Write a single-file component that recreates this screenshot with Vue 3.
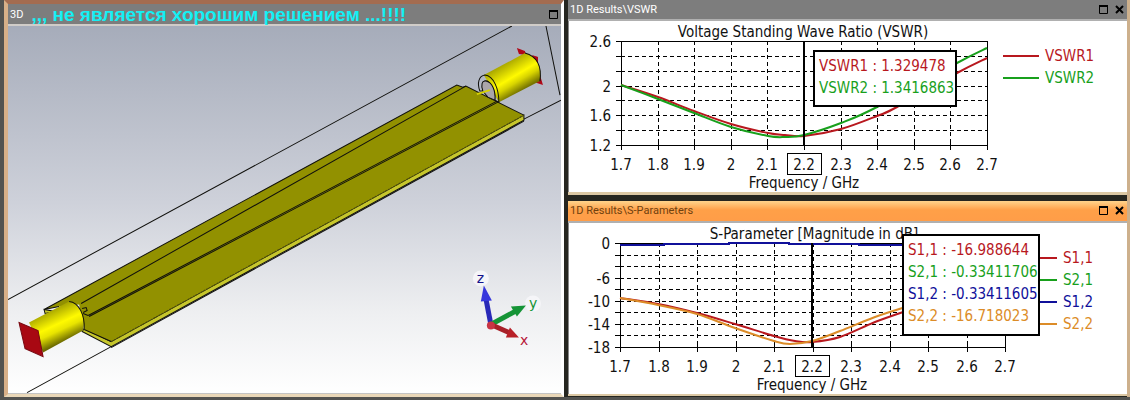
<script setup>
const red = '#b8181e'
const green = '#18a01c'
const blue = '#10109a'
const orange = '#dc8c28'

const steps = ['1.7', '1.8', '1.9', '2', '2.1', '2.2', '2.3', '2.4', '2.5', '2.6', '2.7']

function smooth(points) {
  let d = `M${points[0][0]} ${points[0][1]}`
  for (let i = 0; i < points.length - 1; i++) {
    const a = points[i - 1] || points[i]
    const b = points[i]
    const c = points[i + 1]
    const e = points[i + 2] || c
    d += ` C${b[0] + (c[0] - a[0]) / 6} ${b[1] + (c[1] - a[1]) / 6} ${c[0] - (e[0] - b[0]) / 6} ${c[1] - (e[1] - b[1]) / 6} ${c[0]} ${c[1]}`
  }
  return d
}

const charts = [
  {
    id: 'vswr', name: '1D Results\\VSWR', active: false,
    title: 'Voltage Standing Wave Ratio (VSWR)', titleX: 234,
    width: 434, height: 171, left: 52, right: 418, top: 20, bottom: 124, rows: 7, marker: 235,
    labelX: 42,
    labels: [[0, '2.6'], [3, '2'], [5, '1.6'], [7, '1.2']],
    curves: [
      { color: red, d: smooth([[52, 64], [89, 76], [125, 90], [162, 103], [199, 112], [216, 114], [235, 115], [272, 108], [308, 95], [328, 86], [388, 52], [418, 37]]) },
      { color: green, d: smooth([[52, 64], [89, 78], [125, 92], [162, 106], [199, 115], [216, 116], [235, 114], [272, 102], [308, 86], [388, 42], [418, 27]]) }
    ],
    readout: [['VSWR1', '1.329478', red], ['VSWR2', '1.3416863', green]],
    legend: [['VSWR1', red], ['VSWR2', green]]
  },
  {
    id: 'spar', name: '1D Results\\S-Parameters', active: true,
    title: 'S-Parameter [Magnitude in dB]', titleX: 245,
    width: 452, height: 171, left: 51, right: 436, top: 20, bottom: 124, rows: 9, marker: 243,
    labelX: 41,
    labels: [[0, '0'], [3, '-6'], [5, '-10'], [7, '-14'], [9, '-18']],
    curves: [
      { color: blue, d: 'M51 22H95V21H160V20H220V21H290V22H340' },
      { color: red, d: smooth([[51, 75], [89, 81], [128, 90], [166, 101], [205, 113], [226, 118], [243, 119], [271, 114], [306, 99], [340, 87]]) },
      { color: orange, d: smooth([[51, 75], [89, 82], [128, 91], [166, 105], [205, 118], [221, 121], [243, 118], [271, 108], [306, 94], [340, 83]]) }
    ],
    readout: [['S1,1', '-16.988644', red], ['S2,1', '-0.33411706', green], ['S1,2', '-0.33411605', blue], ['S2,2', '-16.718023', orange]],
    legend: [['S1,1', red], ['S2,1', green], ['S1,2', blue], ['S2,2', orange]]
  }
]

const gx = (c, i) => Math.round(c.left + (c.right - c.left) * i / 10)
const gy = (c, i) => Math.round(c.top + (c.bottom - c.top) * i / c.rows)
</script>

<template>
  <main class="desktop">
    <section class="window scene">
      <header class="bar">
        <span class="name">3D</span>
        <h1>,,, не является хорошим решением ...!!!!</h1>
        <button type="button" aria-label="Maximize"><svg width="9" height="9" viewBox="0 0 9 9"><path d="M0 1H9" stroke-width="2" /><path d="M0.5 1V8.5H8.5V1" /></svg></button>
      </header>
      <svg class="view" viewBox="9 26 552 367" role="img" aria-label="3D model">
        <defs>
          <linearGradient id="sky" x1="0" y1="0" x2="0" y2="1">
            <stop offset="0" stop-color="#a6acba" />
            <stop offset=".48" stop-color="#ced1da" />
            <stop offset=".78" stop-color="#eeeff1" />
            <stop offset="1" stop-color="#fff" />
          </linearGradient>
          <linearGradient id="tubeA" gradientUnits="userSpaceOnUse" x1="50" y1="311" x2="64" y2="341">
            <stop offset="0" stop-color="#aaa800" /><stop offset=".45" stop-color="#fffa00" />
            <stop offset=".65" stop-color="#e8e400" /><stop offset="1" stop-color="#6d6b00" />
          </linearGradient>
          <linearGradient id="tubeB" gradientUnits="userSpaceOnUse" x1="504" y1="64" x2="520" y2="91">
            <stop offset="0" stop-color="#aaa800" /><stop offset=".5" stop-color="#fffa00" />
            <stop offset=".7" stop-color="#d8d400" /><stop offset="1" stop-color="#777500" />
          </linearGradient>
        </defs>
        <rect x="9" y="26" width="552" height="367" fill="url(#sky)" />
        <g class="edge">
          <path d="M9 299L512 26M546 26L560 95M561 100L524 119M112 346L28 392" />
          <path fill="#c6c62c" d="M112 341L524 115V120L112 346L83 331L85 328ZM45 309L46 313L56 311Z" />
          <path fill="#929100" stroke="none" d="M45 309L457 85L463 87L466 86L524 115L112 341L85 329L80 304L60 306Z" />
          <path d="M60 306L45 309L457 85L463 87L466 86L524 115M85 329L112 341" />
          <path d="M112 341L524 115" stroke="#4a4a08" stroke-dasharray="2 1" />
          <path d="M82 303L466 86M89 315L497 101M90 316L498 102" />
          <path d="M112 347L524 121" />
        </g>
        <path fill="#b00818" d="M517 48L525 51L526 55L519 54ZM531 56L538 57L538 64ZM540 75L543 85L534 82Z" />
        <path fill="url(#tubeB)" d="M484 75L525 53Q543 58 540 81L499 102Z" />
        <path fill="#b00818" d="M532 55L538 57L538 63Z" />
        <path class="edge" d="M525 53Q543 58 540 81" />
        <path class="edge" fill="#b0ae00" d="M480 91C477 83 479 76 485 75C494 76 499 89 499 102L495 100C496 90 489 79 485 81C482 82 482 86 483 91Z" />
        <path class="edge shade" d="M483 91C481 85 482 80 486 81C492 82 496 90 495 100L488 97Z" />
        <path d="M477 94L490 90" stroke="#d8d400" stroke-width="2" />
        <path fill="url(#tubeA)" d="M30 322L70 301C80 302 86 315 84 330L44 352Z" />
        <path class="edge" d="M70 301C80 302 86 315 85 329M83 308L87 307L88 310L84 312M84 313L89 315" />
        <path fill="#a80812" stroke="#780810" d="M20 322L39 330L44 356L26 348Z" />
        <g fill="#f5f5f8">
          <circle cx="481" cy="278" r="8" /><circle cx="533" cy="303" r="8" /><circle cx="524" cy="339" r="6" />
        </g>
        <path d="M491 324L486 298" stroke="#2929b8" stroke-width="5" />
        <path fill="#3636dc" d="M484 285L492 300L481 301Z" />
        <path d="M491 324L515 311" stroke="#159436" stroke-width="5" />
        <path fill="#159436" d="M526 305L511 306L517 316Z" />
        <path d="M491 324L509 332" stroke="#a82028" stroke-width="5" />
        <path fill="#b82028" d="M519 337L510 327L506 337Z" />
        <circle cx="491" cy="325" r="4" fill="#c83444" />
        <g class="axis">
          <text x="477" y="283" fill="#14148c">z</text>
          <text x="529" y="307" fill="#159436">y</text>
          <text x="520" y="344" fill="#b81838">x</text>
        </g>
      </svg>
    </section>

    <div class="results">
      <section v-for="c in charts" :key="c.id" class="window result" :class="{ active: c.active }">
        <header class="bar">
          <h2 class="name">{{ c.name }}</h2>
          <button type="button" aria-label="Maximize"><svg width="9" height="9" viewBox="0 0 9 9"><path d="M0 1H9" stroke-width="2" /><path d="M0.5 1V8.5H8.5V1" /></svg></button>
          <button type="button" aria-label="Close"><svg width="9" height="9" viewBox="0 0 9 9"><path d="M1 1L8 8M8 1L1 8" stroke-width="2" /></svg></button>
        </header>
        <div class="chart" :class="c.id">
          <svg class="plot" :viewBox="`0 0 ${c.width} ${c.height}`" role="img" :aria-label="c.title">
            <text :x="c.titleX" y="16">{{ c.title }}</text>
            <g class="grid">
              <path v-for="i in 9" :key="'v' + i" :d="`M${gx(c, i)} ${c.top}V${c.bottom}`" />
              <path v-for="i in c.rows - 1" :key="'h' + i" :d="`M${c.left} ${gy(c, i)}H${c.right}`" />
            </g>
            <g class="ticks">
              <path v-for="(s, i) in steps" :key="'t' + s" :d="`M${gx(c, i)} ${c.bottom - 3}V${c.bottom + 5}`" />
              <path v-for="i in c.rows + 1" :key="'u' + i" :d="`M${c.left - 5} ${gy(c, i - 1)}H${c.left + 1}`" />
              <path :d="`M${c.left} ${c.top}H${c.right}V${c.bottom}H${c.left}Z`" />
            </g>
            <path v-for="(k, i) in c.curves" :key="i" class="curve" :d="k.d" :stroke="k.color" />
            <path class="marker" :d="`M${c.marker} ${c.top}V${c.bottom}`" />
            <text v-for="l in c.labels" :key="l[1]" class="end" :x="c.labelX" :y="gy(c, l[0]) + 6">{{ l[1] }}</text>
            <text v-for="(s, i) in steps" :key="s" :x="i === 5 ? c.marker : gx(c, i)" y="149">{{ s }}</text>
            <rect class="pick" :x="c.marker - 17" y="132" width="34" height="21" />
            <text :x="c.marker" y="167">Frequency / GHz</text>
          </svg>
          <ul class="legend">
            <li v-for="l in c.legend" :key="l[0]" :style="{ color: l[1] }"><i></i><span>{{ l[0] }}</span></li>
          </ul>
          <div class="readout">
            <p v-for="r in c.readout" :key="r[0]" :style="{ color: r[2] }">{{ r[0] }} : {{ r[1] }}</p>
          </div>
        </div>
      </section>
    </div>
  </main>
</template>

<style>
body { margin: 0; background: #535350; }
</style>

<style scoped>
* { box-sizing: border-box; }
.desktop {
  display: grid;
  grid-template-columns: 564fr 566fr;
  background: #535350;
  padding-bottom: 4px;
  font-family: "DejaVu Sans Condensed", "Noto Sans", sans-serif;
}
.scene {
  margin-left: 4px;
  border-style: solid;
  border-width: 4px 3px 3px 4px;
  border-color: #a46c50 #fff #ead8b8 #d8b088;
}
.bar {
  display: flex;
  align-items: center;
  height: 20px;
  background: #7d7d7d;
  color: #fff;
}
.name { margin: 0; font: 11px Roboto, "Noto Sans", sans-serif; }
.scene .bar { height: 22px; padding: 0 3px 0 2px; border-bottom: 2px solid #d0ccc8; }
.scene h1 { flex: 1; margin: 0 0 0 8px; padding-top: 2px; font: bold 19px/20px "Liberation Sans", sans-serif; color: #14f0f4; white-space: nowrap; }
button { display: flex; padding: 0; border: 0; background: none; color: #000; }
button path { fill: none; stroke: #000; }
.view { display: block; width: 100%; }
.edge { fill: none; stroke: #10100c; stroke-width: 1; }
.edge.shade { fill: #aaa5aa; }
.axis text { font-family: "DejaVu Sans", sans-serif; font-size: 14px; }
.results { display: flex; flex-direction: column; gap: 6px; background: #262620; padding-left: 4px; border-right: 3px solid #cdb08c; }
.result { background: #fff; border-bottom: 3px solid #dcc8a4; }
.result .bar { height: 21px; padding: 0 3px 1px 2px; gap: 7px; border-bottom: 2px solid #b0b0b0; }
.result .name { flex: 1; }
.result.active { border-bottom-width: 2px; }
.result.active .bar { height: 22px; background: linear-gradient(#ffd48c, #ffa048 45%, #ff9d48); }
.active .name { color: #70410f; }
.chart { position: relative; display: grid; border-left: 1px solid #888; background: #fff; }
.vswr { grid-template-columns: 434fr 124fr; }
.spar { grid-template-columns: 452fr 106fr; }
.plot { display: block; width: 100%; }
.plot text { font-size: 15px; text-anchor: middle; fill: #111; }
.plot text.end { text-anchor: end; }
.grid path, .ticks path, .pick { fill: none; stroke: #000; stroke-width: 1; shape-rendering: crispEdges; }
.grid path { stroke-dasharray: 4 3; }
.curve { fill: none; stroke-width: 2; }
.marker { stroke: #000; stroke-width: 2; }
.legend { margin: 24px 0 0; padding: 0; list-style: none; font-size: 15px; line-height: 22px; }
.legend li { display: flex; align-items: center; gap: 6px; }
.legend i { width: 36px; height: 2px; background: currentColor; }
.readout {
  position: absolute;
  left: 244px;
  top: 29px;
  padding: 3px 4px;
  height: 57px;
  width: 144px;
  border: 2px solid #000;
  background: #fff;
  font-size: 15px;
  line-height: 22px;
  white-space: nowrap;
}
.readout p { margin: 0; }
.spar .readout { left: 333px; top: 11px; width: 138px; height: 102px; }
</style>
